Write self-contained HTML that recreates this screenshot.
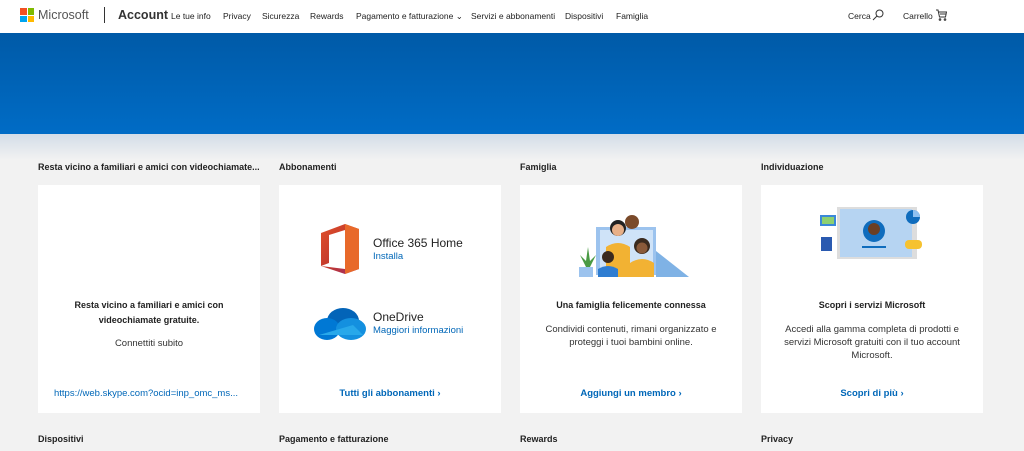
<!DOCTYPE html>
<html><head><meta charset="utf-8"><style>
*{margin:0;padding:0;box-sizing:border-box}
body{width:1024px;height:451px;overflow:hidden;background:#f2f2f2;font-family:"Liberation Sans",sans-serif;color:#222;position:relative}
.hdr{position:absolute;left:0;top:0;width:1024px;height:33px;background:#fff;font-size:8.5px}
.hdr span{position:absolute;top:11px;color:#222}
.band{position:absolute;top:33px;left:0;width:1024px;height:101px;background:linear-gradient(#005aa7,#006cc6)}
.fade{position:absolute;top:134px;left:0;width:1024px;height:26px;background:linear-gradient(#d3dde8,#f2f2f2)}
.t{position:absolute;font-size:9px;font-weight:bold;color:#222}
.card{position:absolute;top:185px;width:222px;height:228px;background:#fff;text-align:center;font-size:9.5px}
.lk{color:#0067b8;font-weight:bold;position:absolute;left:0;right:0;top:203px;font-size:9.5px}
.b{font-weight:bold;position:absolute;left:0;right:0;font-size:9px}
.p{position:absolute;left:20px;right:20px;line-height:13px;color:#333}
</style></head><body>
<div class="hdr">
<div style="position:absolute;left:20px;top:8px;width:14px;height:14px">
<div style="position:absolute;left:0;top:0;width:6.5px;height:6.5px;background:#f25022"></div>
<div style="position:absolute;left:7.5px;top:0;width:6.5px;height:6.5px;background:#7fba00"></div>
<div style="position:absolute;left:0;top:7.5px;width:6.5px;height:6.5px;background:#00a4ef"></div>
<div style="position:absolute;left:7.5px;top:7.5px;width:6.5px;height:6.5px;background:#ffb900"></div></div>
<span style="left:38px;top:8px;font-size:12.5px;color:#555">Microsoft</span>
<div style="position:absolute;left:104px;top:7px;width:1px;height:16px;background:#333"></div>
<span style="left:118px;top:8px;font-size:12.5px;font-weight:bold;color:#333">Account</span>
<span style="left:171px">Le tue info</span>
<span style="left:223px">Privacy</span>
<span style="left:262px">Sicurezza</span>
<span style="left:310px">Rewards</span>
<span style="left:356px">Pagamento e fatturazione ⌄</span>
<span style="left:471px">Servizi e abbonamenti</span>
<span style="left:565px">Dispositivi</span>
<span style="left:616px">Famiglia</span>
<span style="left:848px">Cerca</span>
<svg style="position:absolute;left:872px;top:9px" width="12" height="12" viewBox="0 0 12 12" fill="none" stroke="#333"><circle cx="7.5" cy="4.5" r="3.5"/><path d="M5 7L1 11"/></svg>
<span style="left:903px">Carrello</span>
<svg style="position:absolute;left:935px;top:9px" width="12" height="12" viewBox="0 0 12 12" fill="none" stroke="#333"><path d="M1 1h2l1.5 7h6l1-5H3.5M5 5h6"/><circle cx="5" cy="10.5" r=".8"/><circle cx="10" cy="10.5" r=".8"/></svg>
</div>
<div class="band"></div><div class="fade"></div>
<div class="t" style="left:38px;top:162px">Resta vicino a familiari e amici con videochiamate...</div>
<div class="t" style="left:279px;top:162px">Abbonamenti</div>
<div class="t" style="left:520px;top:162px">Famiglia</div>
<div class="t" style="left:761px;top:162px">Individuazione</div>
<div class="card" style="left:38px">
<div class="b" style="top:113px;line-height:15px">Resta vicino a familiari e amici con<br>videochiamate gratuite.</div>
<div class="p" style="top:152px">Connettiti subito</div>
<div class="lk" style="font-weight:normal;text-align:left;left:16px">https://web.skype.com?ocid=inp_omc_ms...</div></div>
<div class="card" style="left:279px">
<svg style="position:absolute;left:38px;top:38px" width="44" height="52" viewBox="0 0 44 52"><defs><linearGradient id="o" x1="0" y1="0" x2="1" y2="1"><stop offset="0" stop-color="#e0502a"/><stop offset=".5" stop-color="#c43a2c"/><stop offset="1" stop-color="#9b2a6b"/></linearGradient></defs><path d="M4 10L28 1l14 5v40l-14 5L4 43l24 3V7L12 12v28l-8 3z" fill="url(#o)"/><path d="M28 1l14 5v40l-14 5z" fill="#e8692a"/></svg>
<div style="position:absolute;left:94px;top:51px;font-size:12px;text-align:left">Office 365 Home</div>
<div style="position:absolute;left:94px;top:66px;color:#0067b8;font-size:9.5px">Installa</div>
<svg style="position:absolute;left:34px;top:122px" width="54" height="34" viewBox="0 0 54 34"><ellipse cx="30" cy="14" rx="16" ry="13" fill="#0364b8"/><ellipse cx="14" cy="22" rx="13" ry="11" fill="#0078d4"/><ellipse cx="38" cy="22" rx="15" ry="11" fill="#1490df"/><path d="M6 28h44l-10-10z" fill="#28a8ea"/></svg>
<div style="position:absolute;left:94px;top:125px;font-size:12px">OneDrive</div>
<div style="position:absolute;left:94px;top:140px;color:#0067b8;font-size:9.5px">Maggiori informazioni</div>
<div class="lk">Tutti gli abbonamenti ›</div></div>
<div class="card" style="left:520px">
<svg style="position:absolute;left:56px;top:26px" width="115" height="68" viewBox="0 0 115 68"><path d="M20 16h60v48H20z" fill="#9cc3ee"/><path d="M24 19h53v42H24z" fill="#cfe3f8"/><path d="M80 40l33 26H80z" fill="#7fb2e5"/><path d="M3 56h14v10H3z" fill="#9cc3ee"/><path d="M10 56l-6-12 6 6 2-14 2 14 6-6-6 12z" fill="#4a9a44"/><circle cx="56" cy="11" r="7" fill="#7a4a2a"/><circle cx="42" cy="17" r="8" fill="#222"/><circle cx="42" cy="19" r="6" fill="#e8b088"/><path d="M30 66V36q12-8 24 0v30z" fill="#f2b233"/><circle cx="66" cy="35" r="8" fill="#3a2a1e"/><circle cx="66" cy="37" r="5.5" fill="#8a5a3a"/><path d="M54 66V52q12-8 24 0v14z" fill="#f2b233"/><circle cx="32" cy="46" r="6" fill="#3a2a1e"/><path d="M22 66V58q10-6 20 0v8z" fill="#2f7dd1"/></svg>
<div class="b" style="top:115px">Una famiglia felicemente connessa</div>
<div class="p" style="top:138px">Condividi contenuti, rimani organizzato e proteggi i tuoi bambini online.</div>
<div class="lk">Aggiungi un membro ›</div></div>
<div class="card" style="left:761px">
<svg style="position:absolute;left:56px;top:18px" width="110" height="66" viewBox="0 0 110 66"><rect x="20" y="4" width="80" height="52" fill="#ddd"/><rect x="23" y="6" width="72" height="48" fill="#b6d4f2"/><circle cx="57" cy="28" r="11" fill="#0f6cbd"/><circle cx="57" cy="26" r="6" fill="#6b3f24"/><rect x="45" y="43" width="24" height="2" fill="#0f6cbd"/><rect x="3" y="12" width="16" height="11" fill="#3a88d8"/><rect x="5" y="14" width="12" height="7" fill="#8dd070"/><rect x="4" y="34" width="11" height="14" fill="#2a5ab0"/><circle cx="96" cy="14" r="7" fill="#0f6cbd"/><path d="M96 7a7 7 0 017 7h-7z" fill="#8ec0f0"/><rect x="88" y="37" width="17" height="9" rx="4" fill="#f6c230"/></svg>
<div class="b" style="top:115px">Scopri i servizi Microsoft</div>
<div class="p" style="top:138px">Accedi alla gamma completa di prodotti e servizi Microsoft gratuiti con il tuo account Microsoft.</div>
<div class="lk">Scopri di più ›</div></div>
<div class="t" style="left:38px;top:434px">Dispositivi</div>
<div class="t" style="left:279px;top:434px">Pagamento e fatturazione</div>
<div class="t" style="left:520px;top:434px">Rewards</div>
<div class="t" style="left:761px;top:434px">Privacy</div>
</body></html>
